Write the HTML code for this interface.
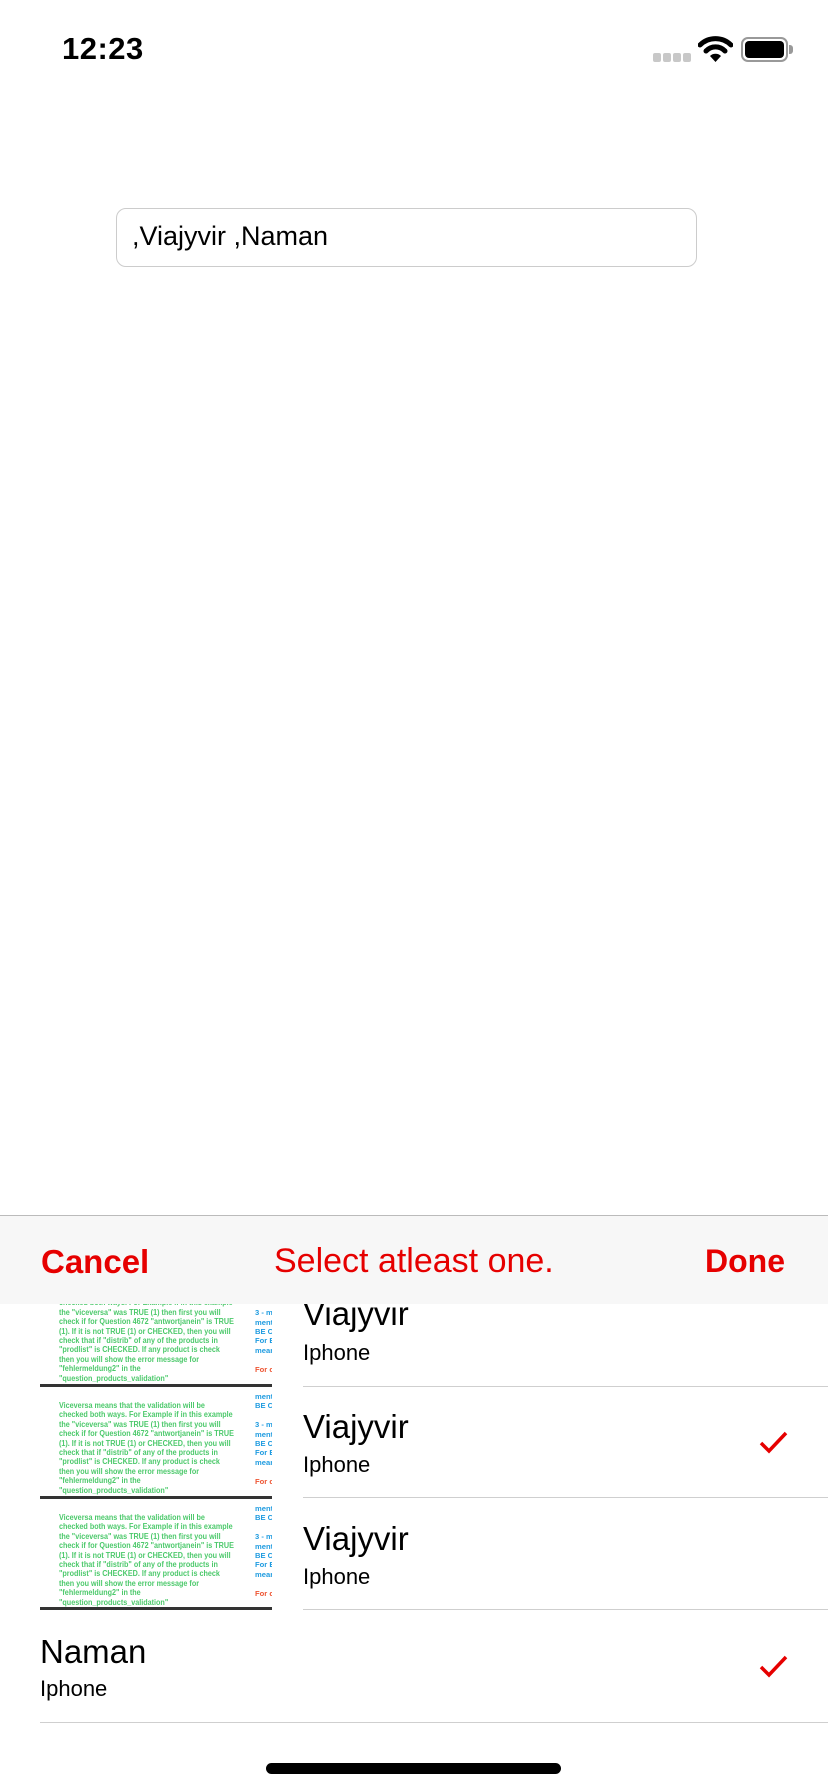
<!DOCTYPE html>
<html><head><meta charset="utf-8"><style>
*{margin:0;padding:0;box-sizing:border-box}
body{width:828px;height:1792px;background:#fff;position:relative;overflow:hidden;font-family:"Liberation Sans",sans-serif;color:#000}
.a{position:absolute}
.time{left:62px;top:31px;font-size:31px;font-weight:bold;letter-spacing:0.5px}
.dot{width:8px;height:9px;border-radius:2px;background:#c8c8c8;top:53px}
.field{left:116px;top:208px;width:581px;height:59px;border:1px solid #ccc;border-radius:10px}
.field span{position:absolute;left:15px;top:12px;font-size:27px}
.bar{left:0;top:1215px;width:828px;height:89px;background:#f7f7f7;border-top:1px solid #bbb;z-index:5}
.red{color:#e60000}
.cell{left:40px;width:232px;height:112px;overflow:hidden}
.cell .g{position:absolute;left:19px;top:14px;width:196px;font-size:8px;line-height:9.4px;color:#4cc96b;font-weight:bold;transform:scaleX(0.9);transform-origin:0 0}
.cell .b{position:absolute;left:215px;top:5px;font-size:7.6px;line-height:9.4px;color:#1e9be0;font-weight:bold;white-space:nowrap}
.ln{left:40px;width:232px;height:3px;background:#333}
.sep{height:1px;background:#cfcfcf}
.t1{font-size:33px}
.t2{font-size:22px}
</style></head><body>
<div class="a time">12:23</div>
<div class="a dot" style="left:653px"></div>
<div class="a dot" style="left:663px"></div>
<div class="a dot" style="left:673px"></div>
<div class="a dot" style="left:683px"></div>
<svg class="a" style="left:698px;top:36px" width="35" height="26" viewBox="0 0 35 26">
<path d="M2 9 A22 22 0 0 1 33 9" stroke="#000" stroke-width="5" fill="none" stroke-linecap="round"/>
<path d="M8 15 A13 13 0 0 1 27 15" stroke="#000" stroke-width="5" fill="none" stroke-linecap="round"/>
<path d="M12 20 L17.5 26 L23 20 A8 8 0 0 0 12 20Z" fill="#000"/>
</svg>
<div class="a" style="left:741px;top:37px;width:47px;height:25px;border:2px solid #999;border-radius:7px;padding:2px"><div style="width:100%;height:100%;background:#000;border-radius:4px"></div></div>
<div class="a" style="left:789px;top:45px;width:4px;height:9px;background:#999;border-radius:0 3px 3px 0"></div>

<div class="a field"><span>,Viajyvir ,Naman</span></div>

<div class="a bar">
<div class="a red" style="left:41px;top:27px;font-size:33px;font-weight:bold">Cancel</div>
<div class="a red" style="left:274px;top:26px;font-size:34px;">Select atleast one.</div>
<div class="a red" style="left:705px;top:27px;font-size:32px;font-weight:bold">Done</div>
</div>

<div class="a cell" style="top:1275px"><div class="g">Viceversa means that the validation will be checked both ways. For Example if in this example the "viceversa" was TRUE (1) then first you will check if for Question 4672 "antwortjanein" is TRUE (1). If it is not TRUE (1) or CHECKED, then you will check that if "distrib" of any of the products in "prodlist" is CHECKED. If any product is check then you will show the error message for "fehlermeldung2" in the "question_products_validation"</div><div class="b">ment<br>BE CH<br><br>3 - m<br>ment<br>BE CH<br>For E<br>mear<br><br><span style="color:#e53">For c</span></div></div>
<div class="a ln" style="top:1384px"></div>
<div class="a cell" style="top:1387px"><div class="g">Viceversa means that the validation will be checked both ways. For Example if in this example the "viceversa" was TRUE (1) then first you will check if for Question 4672 "antwortjanein" is TRUE (1). If it is not TRUE (1) or CHECKED, then you will check that if "distrib" of any of the products in "prodlist" is CHECKED. If any product is check then you will show the error message for "fehlermeldung2" in the "question_products_validation"</div><div class="b">ment<br>BE CH<br><br>3 - m<br>ment<br>BE CH<br>For E<br>mear<br><br><span style="color:#e53">For c</span></div></div>
<div class="a ln" style="top:1496px"></div>
<div class="a cell" style="top:1499px"><div class="g">Viceversa means that the validation will be checked both ways. For Example if in this example the "viceversa" was TRUE (1) then first you will check if for Question 4672 "antwortjanein" is TRUE (1). If it is not TRUE (1) or CHECKED, then you will check that if "distrib" of any of the products in "prodlist" is CHECKED. If any product is check then you will show the error message for "fehlermeldung2" in the "question_products_validation"</div><div class="b">ment<br>BE CH<br><br>3 - m<br>ment<br>BE CH<br>For E<br>mear<br><br><span style="color:#e53">For c</span></div></div>
<div class="a ln" style="top:1607px"></div>

<div class="a t1" style="left:303px;top:1295px">Viajyvir</div>
<div class="a t2" style="left:303px;top:1340px">Iphone</div>
<div class="a sep" style="left:303px;top:1386px;width:525px"></div>
<div class="a t1" style="left:303px;top:1408px">Viajyvir</div>
<div class="a t2" style="left:303px;top:1452px">Iphone</div>
<div class="a sep" style="left:303px;top:1497px;width:525px"></div>
<div class="a t1" style="left:303px;top:1520px">Viajyvir</div>
<div class="a t2" style="left:303px;top:1564px">Iphone</div>
<div class="a sep" style="left:303px;top:1609px;width:525px"></div>
<div class="a t1" style="left:40px;top:1633px">Naman</div>
<div class="a t2" style="left:40px;top:1676px">Iphone</div>
<div class="a sep" style="left:40px;top:1722px;width:788px"></div>

<svg class="a" style="left:759px;top:1430px" width="30" height="25" viewBox="0 0 30 25"><path d="M2 13 L10 21 L27 3" stroke="#e60000" stroke-width="3.5" fill="none"/></svg>
<svg class="a" style="left:759px;top:1654px" width="30" height="25" viewBox="0 0 30 25"><path d="M2 13 L10 21 L27 3" stroke="#e60000" stroke-width="3.5" fill="none"/></svg>

<div class="a" style="left:266px;top:1763px;width:295px;height:11px;border-radius:6px;background:#000"></div>
</body></html>
